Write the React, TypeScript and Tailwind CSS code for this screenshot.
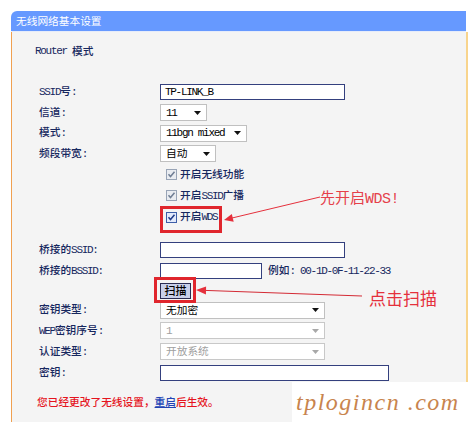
import React from "react";

function T({ s }: { s: string }) {
  const parts = s.match(/[\x00-\x7F]+|[^\x00-\x7F]+/g) || [];
  return (
    <>
      {parts.map((p, i) =>
        /^[\x00-\x7F]+$/.test(p) ? (
          <span key={i} className="font-['Liberation_Mono',monospace] text-[11px] tracking-[-1.3px] whitespace-pre">
            {p}
          </span>
        ) : (
          <span key={i}>{p}</span>
        )
      )}
    </>
  );
}

function Tri({ gray }: { gray?: boolean }) {
  return (
    <svg width="7" height="4" viewBox="0 0 7 4" className="shrink-0">
      <path d="M0 0 L7 0 L3.5 4 Z" fill={gray ? "#a8a8a8" : "#111"} />
    </svg>
  );
}

function Sel({ w, text, disabled }: { w: string; text: string; disabled?: boolean }) {
  return (
    <div
      className={`flex items-center justify-between h-[17px] ${w} border bg-white pl-[5px] pr-[5px] ${
        disabled ? "border-[#c8c8c8] text-[#a0a0a0]" : "border-[#c0c0c0] text-black"
      }`}
    >
      <span className="leading-none"><T s={text} /></span>
      <Tri gray={disabled} />
    </div>
  );
}

function Inp({ w, text }: { w: string; text?: string }) {
  return (
    <div className={`flex items-center h-[16px] ${w} border border-[#34407e] bg-white pl-[4px] text-black`}>
      {text ? <span className="leading-none"><T s={text} /></span> : null}
    </div>
  );
}

function Cb({ on }: { on?: boolean }) {
  return (
    <svg width="11" height="11" viewBox="0 0 11 11" className="shrink-0">
      <rect x="0.5" y="0.5" width="10" height="10" fill={on ? "#e2eafb" : "#e9ecf1"} stroke={on ? "#3d5ea8" : "#98a4b6"} />
      <path d="M2.5 5.3 L4.5 7.5 L8.5 2.8" fill="none" stroke={on ? "#1f3a88" : "#6f7e94"} strokeWidth="1.5" />
    </svg>
  );
}

function Row({ label, h, children }: { label?: string; h: string; children?: React.ReactNode }) {
  return (
    <div className={`flex items-center ${h}`}>
      <div className="w-[121px] shrink-0 text-[#16275e] font-medium leading-none">{label ? <T s={label} /> : null}</div>
      {children}
    </div>
  );
}

function CbRow({ h, text, on }: { h: string; text: string; on?: boolean }) {
  return (
    <Row h={h}>
      <div className="flex items-center gap-[3px] ml-[6px] text-[#16275e] font-medium leading-none">
        <Cb on={on} />
        <span><T s={text} /></span>
      </div>
    </Row>
  );
}

export default function App() {
  return (
    <div className="relative w-[468px] h-[422px] bg-white overflow-hidden font-['Noto_Sans_CJK_SC',sans-serif] text-[10.7px]">
      <div className="ml-[11px] pt-[11px] w-[457px]">
        <div className="h-[21px] bg-[#6699ff] rounded-tl-[6px] w-[455px] flex items-center pl-[5px] text-white border-b border-[#e6ecfa] leading-none">
          无线网络基本设置
        </div>
        <div className="h-[390px] bg-[#f4f4f4] border-l-[1.5px] border-[#f0a050] border-r-2 border-r-[#f8d48c] pl-[27px]">
          <div className="pt-[12px] h-[26px] flex items-center ml-[-4px] text-[#16275e] font-medium leading-none">
            <T s="Router 模式" />
          </div>
          <div className="mt-[23px]">
            <Row label="SSID号:" h="h-[21px]">
              <Inp w="w-[185px]" text="TP-LINK_B" />
            </Row>
            <Row label="信道:" h="h-[21px]">
              <Sel w="w-[47px]" text="11" />
            </Row>
            <Row label="模式:" h="h-[20px]">
              <Sel w="w-[87px]" text="11bgn mixed" />
            </Row>
            <Row label="频段带宽:" h="h-[21px]">
              <Sel w="w-[56px]" text="自动" />
            </Row>
            <CbRow h="h-[21px]" text="开启无线功能" />
            <CbRow h="h-[21px]" text="开启SSID广播" />
            <CbRow h="h-[22px]" text="开启WDS" on />
            <div className="h-[11px]" />
            <Row label="桥接的SSID:" h="h-[21px]">
              <Inp w="w-[185px]" />
            </Row>
            <Row label="桥接的BSSID:" h="h-[21px]">
              <Inp w="w-[102px]" />
              <span className="ml-[6px] text-[#16275e] font-medium leading-none">
                <T s="例如: 00-1D-0F-11-22-33" />
              </span>
            </Row>
            <Row h="h-[19px]">
              <div className="h-[16px] w-[31px] bg-[#c8d0ea] border border-[#2a2c52] flex items-center justify-center text-black font-medium leading-none text-[11px]">
                扫描
              </div>
            </Row>
            <Row label="密钥类型:" h="h-[20px]">
              <Sel w="w-[165px]" text="无加密" />
            </Row>
            <Row label="WEP密钥序号:" h="h-[21px]">
              <Sel w="w-[165px]" text="1" disabled />
            </Row>
            <Row label="认证类型:" h="h-[21px]">
              <Sel w="w-[165px]" text="开放系统" disabled />
            </Row>
            <Row label="密钥:" h="h-[21px]">
              <Inp w="w-[229px]" />
            </Row>
          </div>
          <div className="mt-[12px] h-[14px] flex items-center ml-[-2px] text-[#e5141e] font-medium leading-none">
            您已经更改了无线设置，<span className="text-[#2143b4] underline">重启</span>后生效。
          </div>
        </div>
      </div>

      {/* annotations */}
      <div className="absolute left-[160px] top-[206px] w-[62px] h-[27px] border-[3px] border-[#e0262d]" />
      <div className="absolute left-[154px] top-[277px] w-[42px] h-[26px] border-[3px] border-[#e0262d]" />
      <svg className="absolute left-0 top-0" width="468" height="422" viewBox="0 0 468 422">
        <line x1="232" y1="218" x2="320" y2="197" stroke="#e5303c" strokeWidth="1" />
        <polygon points="224,220 233.7,221.8 231.8,214" fill="#e5303c" />
        <line x1="205" y1="290.4" x2="362" y2="296" stroke="#d42a34" strokeWidth="1" />
        <polygon points="196,290 206.1,286.4 205.9,294.4" fill="#e5303c" />
      </svg>
      <div className="absolute left-[320px] top-[189px] text-[#e5404a] text-[15px] leading-none whitespace-nowrap">
        先开启<span className="font-['Liberation_Mono',monospace] tracking-[-0.5px]">WDS!</span>
      </div>
      <div className="absolute left-[369px] top-[289px] text-[#e5303c] text-[17px] leading-none whitespace-nowrap">
        点击扫描
      </div>
      <div className="absolute left-[292px] top-[382px] w-[176px] h-[40px] bg-white flex items-center pl-[4px]">
        <span className="font-['Liberation_Serif',serif] italic text-[24px] tracking-[1.5px] text-[#c8844e] leading-none whitespace-pre">
          tplogincn .com
        </span>
      </div>
    </div>
  );
}
